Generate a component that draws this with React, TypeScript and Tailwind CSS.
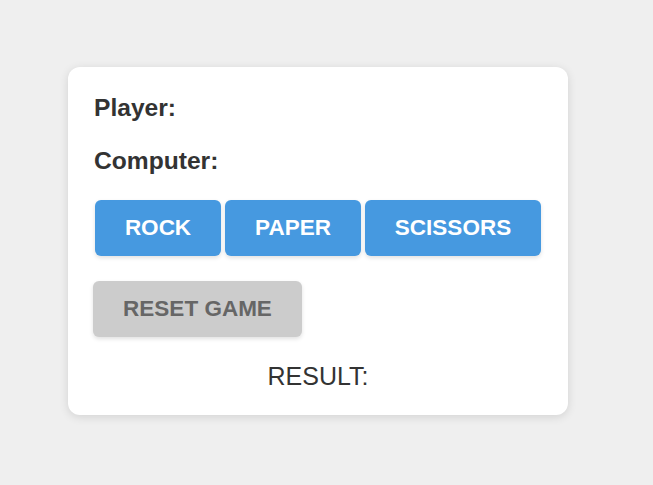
export default function App() {
  return (
    <div className="min-h-[485px] w-full bg-[#efefef] pt-[67px] pl-[68px]" style={{ fontFamily: '"Liberation Sans", Arial, sans-serif' }}>
      <div className="w-[500px] h-[348px] rounded-[12px] bg-white shadow-[0_2px_10px_rgba(0,0,0,0.12)] pl-[25px] pr-[25px] pt-[26px] text-[#333]">
        <div className="text-[24.6px] font-bold leading-[29px] ml-[1px]">Player:</div>
        <div className="text-[24.6px] font-bold leading-[29px] mt-[24px] ml-[1px]">Computer:</div>
        <div className="flex gap-[4px] mt-[25px] ml-[2px]">
          <button className="w-[126px] h-[56px] rounded-[6px] bg-[#4699e0] text-white text-[22.5px] font-bold shadow-[0_2px_4px_rgba(0,0,0,0.12)]">ROCK</button>
          <button className="w-[136px] h-[56px] rounded-[6px] bg-[#4699e0] text-white text-[22.5px] font-bold shadow-[0_2px_4px_rgba(0,0,0,0.12)]">PAPER</button>
          <button className="w-[176px] h-[56px] rounded-[6px] bg-[#4699e0] text-white text-[22.5px] font-bold shadow-[0_2px_4px_rgba(0,0,0,0.12)]">SCISSORS</button>
        </div>
        <button className="block w-[209px] h-[56px] rounded-[6px] bg-[#cccccc] text-[#666] text-[22.5px] font-bold mt-[25px] shadow-[0_2px_4px_rgba(0,0,0,0.12)]">RESET GAME</button>
        <div className="text-[25px] leading-[29px] mt-[25px] text-center">RESULT:</div>
      </div>
    </div>
  );
}
